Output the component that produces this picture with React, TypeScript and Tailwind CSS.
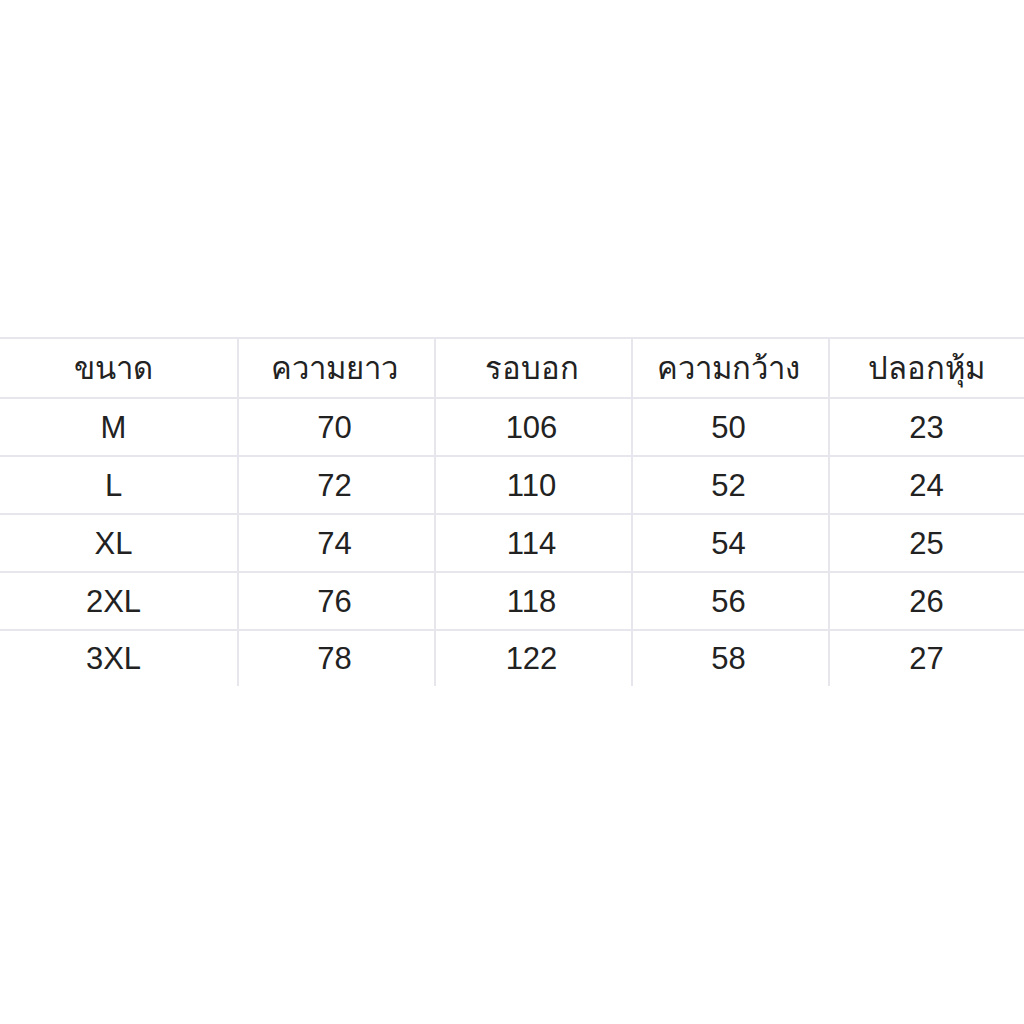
import React from "react";

const header = ["ขนาด", "ความยาว", "รอบอก", "ความกว้าง", "ปลอกหุ้ม"];
const rows = [
  ["M", "70", "106", "50", "23"],
  ["L", "72", "110", "52", "24"],
  ["XL", "74", "114", "54", "25"],
  ["2XL", "76", "118", "56", "26"],
  ["3XL", "78", "122", "58", "27"],
];

function Row({ cells, h, head }: { cells: string[]; h: string; head?: boolean }) {
  return (
    <div className={`flex border-t-2 border-[#e6e6ec] ${h} ${head ? "font-medium" : ""}`}>
      {cells.map((c, i) => (
        <div
          key={i}
          className={
            i === 0
              ? "w-[239px] shrink-0 flex items-center justify-center pr-[10px] border-r-2 border-[#e6e6ec]"
              : i === 4
              ? "w-[197px] shrink-0 flex items-center justify-center pr-[4px]"
              : "w-[197px] shrink-0 flex items-center justify-center pr-[4px] border-r-2 border-[#e6e6ec]"
          }
        >
          {c}
        </div>
      ))}
    </div>
  );
}

export default function App() {
  return (
    <div
      className="w-[1024px] h-[1024px] bg-white overflow-hidden pt-[337px] text-[#222222] text-[31px] leading-none"
      style={{ fontFamily: '"Liberation Sans", "Noto Sans", Arial, sans-serif' }}
    >
      <div className="w-[1030px]">
        <Row cells={header} h="h-[60px]" head />
        {rows.map((r, i) => (
          <Row key={i} cells={r} h={i === rows.length - 1 ? "h-[57px]" : "h-[58px]"} />
        ))}
      </div>
    </div>
  );
}
